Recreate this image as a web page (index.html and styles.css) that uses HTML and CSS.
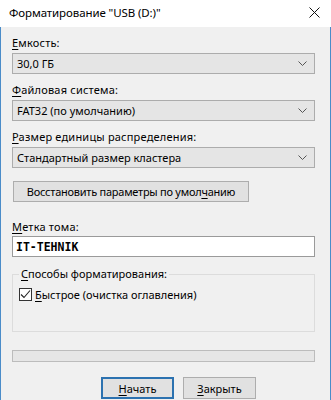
FILE: index.html
```html
<!DOCTYPE html>
<html lang="ru">

<head>
  <meta charset="UTF-8">
  <title>Форматирование</title>
  <link rel="stylesheet" href="styles.css">
</head>

<body>

  <div class="window">
    <div class="titlebar">
      <span class="title">Форматирование "USB (D:)"</span>
      <svg class="close" width="11" height="11" viewBox="0 0 11 11">
        <path d="M0.5 0.5 L10.5 10.5 M10.5 0.5 L0.5 10.5" stroke="#111" stroke-width="1" fill="none" />
      </svg>
    </div>

    <div class="content">
      <div class="field first">
        <div class="label"><u>Е</u>мкость:</div>
        <div class="combo">
          <span>30,0 ГБ</span>
          <svg class="chevron" width="9" height="5" viewBox="0 0 9 5">
            <path d="M0.5 0.5 L4.5 4.5 L8.5 0.5" stroke="#555" fill="none" />
          </svg>
        </div>
      </div>

      <div class="field">
        <div class="label"><u>Ф</u>айловая система:</div>
        <div class="combo">
          <span>FAT32 (по умолчанию)</span>
          <svg class="chevron" width="9" height="5" viewBox="0 0 9 5">
            <path d="M0.5 0.5 L4.5 4.5 L8.5 0.5" stroke="#555" fill="none" />
          </svg>
        </div>
      </div>

      <div class="field">
        <div class="label"><u>Р</u>азмер единицы распределения:</div>
        <div class="combo">
          <span>Стандартный размер кластера</span>
          <svg class="chevron" width="9" height="5" viewBox="0 0 9 5">
            <path d="M0.5 0.5 L4.5 4.5 L8.5 0.5" stroke="#555" fill="none" />
          </svg>
        </div>
      </div>

      <div class="btn restore"><span>Восстановить параметры по умол<u>ч</u>анию</span></div>

      <div class="field volume">
        <div class="label"><u>М</u>етка тома:</div>
        <div class="textbox">IT-TEHNIK</div>
      </div>

      <fieldset class="group">
        <legend><u>С</u>пособы форматирования:</legend>
        <div class="check-row">
          <span class="checkbox">
            <svg width="11" height="11" viewBox="0 0 11 11">
              <path d="M1 5.5 L4 8.5 L10 1.5" stroke="#222" stroke-width="1.1" fill="none" />
            </svg>
          </span>
          <span><u>Б</u>ыстрое (очистка оглавления)</span>
        </div>
      </fieldset>

      <div class="progress"></div>

      <div class="actions">
        <div class="btn action default"><span><u>Н</u>ачать</span></div>
        <div class="btn action"><span><u>З</u>акрыть</span></div>
      </div>
    </div>
  </div>

</body>

</html>
```

FILE: styles.css
```css
body {
  margin: 0;
  font-family: "Noto Sans", "Open Sans", sans-serif;
  font-size: 11px;
  color: #000;
  background: #f0f0f0;
}

u {
  text-underline-offset: 2px;
}

.window {
  width: 331px;
  height: 400px;
  display: flex;
  flex-direction: column;
  box-sizing: border-box;
}

.titlebar {
  height: 27px;
  background: #fff;
  display: flex;
  align-items: center;
  justify-content: space-between;
  padding: 0 11px 2px 9px;
  box-sizing: border-box;
}

.title {
  font-size: 11.5px;
  letter-spacing: -0.1px;
}

.content {
  flex: 1;
  background: #f0f0f0;
  border-left: 1px solid #4a8cc9;
  border-right: 1px solid #4a8cc9;
  padding: 0 15px 0 11px;
}

.label {
  line-height: 16px;
  height: 16px;
  letter-spacing: 0.2px;
}

.field {
  margin-top: 8px;
}

.combo {
  margin-top: 2px;
  height: 21px;
  box-sizing: border-box;
  background: #e5e5e5;
  border: 1px solid #acacac;
  display: flex;
  align-items: center;
  justify-content: space-between;
  padding: 0 7px 0 4px;
}

.btn {
  height: 21px;
  box-sizing: border-box;
  background: #e1e1e1;
  border: 1px solid #adadad;
  display: flex;
  align-items: center;
  justify-content: center;
}

.restore {
  width: 236px;
  margin: 13px 0 0 1px;
  letter-spacing: -0.25px;
}

.field.volume {
  margin-top: 17px;
}

.textbox {
  margin-top: 1px;
  height: 21px;
  box-sizing: border-box;
  background: #fff;
  border: 1px solid #9a9a9a;
  padding: 0 3px;
  display: flex;
  align-items: center;
  font-family: "DejaVu Sans Mono", "Liberation Mono", monospace;
  font-weight: bold;
  font-size: 11.5px;
  letter-spacing: 0;
}

.group {
  margin: 9px 0 0;
  padding: 0 0 0 6px;
  height: 66px;
  box-sizing: border-box;
  border: 1px solid #dcdcdc;
}

.group legend {
  padding: 0 2px;
  margin-left: 0;
  line-height: 16px;
}

.check-row {
  display: flex;
  align-items: center;
  gap: 3px;
  margin-top: 5px;
}

.checkbox {
  width: 13px;
  height: 13px;
  box-sizing: border-box;
  border: 1px solid #333;
  background: #fff;
  display: flex;
  align-items: center;
  justify-content: center;
}

.progress {
  margin-top: 18px;
  height: 12px;
  box-sizing: border-box;
  background: #e6e6e6;
  border: 1px solid #bcbcbc;
}

.actions {
  display: flex;
  gap: 9px;
  margin-top: 15px;
  padding-left: 89px;
}

.action {
  width: 73px;
  height: 22px;
}

.action.default {
  border: 2px solid #2c72b0;
}
```
